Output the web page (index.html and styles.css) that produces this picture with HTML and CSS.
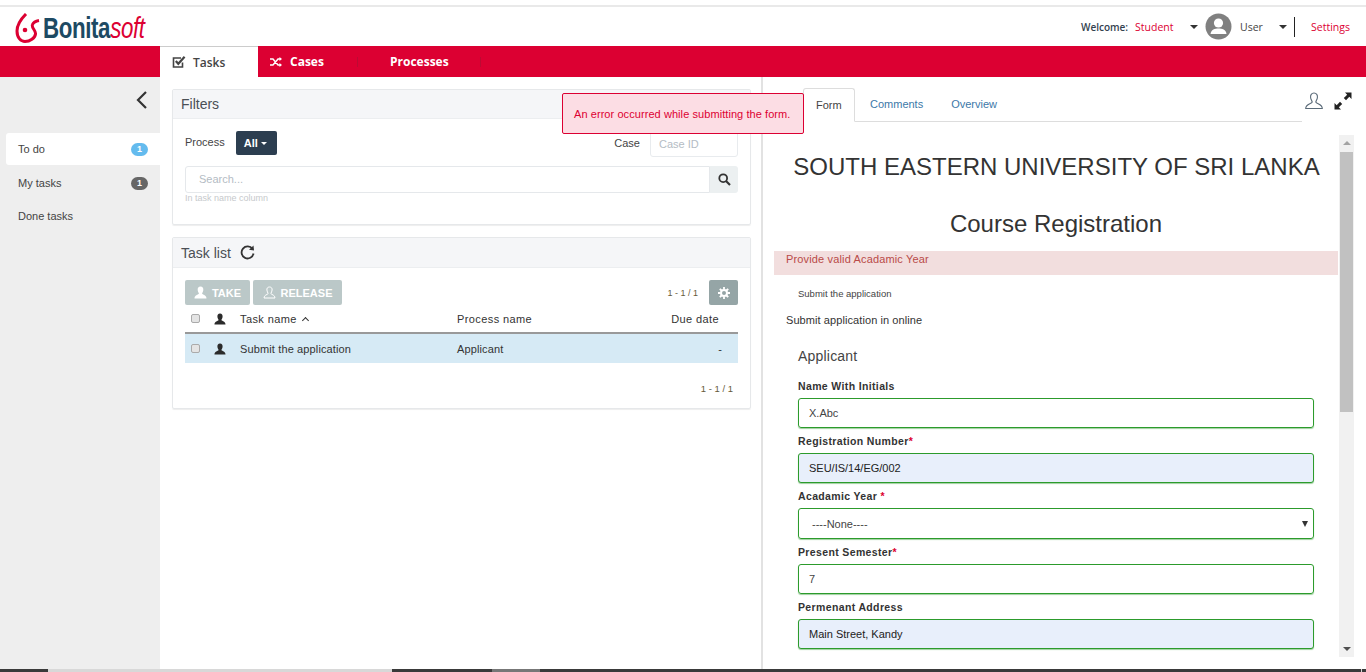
FILE: index.html
```html
<!DOCTYPE html>
<html lang="en">
<head>
    <meta charset="UTF-8">
    <title>Bonita Portal</title>
    <link rel="stylesheet" href="styles.css">
</head>
<body>
    <div class="app">
        <header class="header">
            <div class="logo">
                <svg class="logo-mark" width="26" height="30" viewBox="0 0 26 30">
                    <path d="M11 1 C5 7 2 13 2 18 C2 25 6 28.500 10 28.500 C15 28.500 20 25 20.500 21 C21 17 16 15 17.500 11.500 C18.500 9 21 8 24 7.500" fill="none" stroke="#dc0032" stroke-width="3"/>
                    <circle cx="10" cy="17" r="2.300" fill="#dc0032"/>
                </svg>
                <span class="logo-text"><span class="logo-dark">Bonita</span><span class="logo-red">soft</span></span>
            </div>
            <div class="user-area">
                <span class="welcome">Welcome:</span>
                <span class="student">Student</span>
                <span class="caret student-caret"></span>
                <svg class="avatar" width="27" height="27" viewBox="0 0 27 27">
                    <circle cx="13.5" cy="13.5" r="13" fill="#808080"/>
                    <circle cx="13.5" cy="10" r="4.6" fill="#fff"/>
                    <path d="M5.5 21 C6 16.5 10 15.5 13.5 15.5 C17 15.5 21 16.5 21.5 21 Z" fill="#fff"/>
                </svg>
                <span class="user-name">User</span>
                <span class="caret user-caret"></span>
                <span class="settings">Settings</span>
            </div>
        </header>

        <nav class="nav">
            <a class="nav-item active">
                <svg width="14" height="13" viewBox="0 0 14 13">
                    <path d="M10.5 6.5 V11 H1.5 V2 H9" fill="none" stroke="#444" stroke-width="1.6"/>
                    <path d="M3.8 5 L6.3 7.8 L12.6 0.8" fill="none" stroke="#444" stroke-width="2.2"/>
                </svg>
                Tasks
            </a>
            <a class="nav-item cases">
                <svg width="12" height="10" viewBox="0 0 12 10">
                    <path d="M0 2 H3 L8 8 H10 M0 8 H3 L8 2 H10" fill="none" stroke="#fff" stroke-width="1.4"/>
                    <path d="M9.500 0 L12 2 L9.500 4 Z M9.500 6 L12 8 L9.500 10 Z" fill="#fff"/>
                </svg>
                Cases
            </a>
            <a class="nav-item processes">Processes</a>
        </nav>

        <div class="content">
            <aside class="sidebar">
                <div class="collapse">
                    <svg width="13" height="18" viewBox="0 0 13 18"><path d="M11 1 L3 9 L11 17" fill="none" stroke="#333" stroke-width="2.200"/></svg>
                </div>
                <div class="side-item selected">To do <span class="badge blue">1</span></div>
                <div class="side-item">My tasks <span class="badge grey">1</span></div>
                <div class="side-item">Done tasks</div>
            </aside>

            <main class="tasks">
                <section class="panel filters">
                    <div class="panel-head">Filters</div>
                    <div class="filters-body">
                        <div class="filter-row">
                            <span class="filter-label">Process</span>
                            <span class="all-btn">All <i class="mini-caret"></i></span>
                            <span class="case-label">Case</span>
                            <span class="case-input">Case ID</span>
                        </div>
                        <div class="search">
                            <span class="search-input">Search...</span>
                            <span class="search-btn">
                                <svg width="13" height="13" viewBox="0 0 13 13">
                                    <circle cx="5.200" cy="5.200" r="3.900" fill="none" stroke="#333" stroke-width="1.800"/>
                                    <path d="M8 8 L12 12" stroke="#333" stroke-width="2.200"/>
                                </svg>
                            </span>
                        </div>
                        <div class="hint">In task name column</div>
                    </div>
                </section>

                <section class="panel list">
                    <div class="panel-head list-head">
                        Task list
                        <svg class="refresh" width="15" height="15" viewBox="0 0 15 15">
                            <path d="M12.500 4 A6 6 0 1 0 13.500 8.500" fill="none" stroke="#333" stroke-width="1.800"/>
                            <path d="M9 4.800 L14 5.500 L13.500 0.500 Z" fill="#333"/>
                        </svg>
                    </div>
                    <div class="list-body">
                        <div class="toolbar">
                            <span class="tool-btn take">
                                <svg width="13" height="13" viewBox="0 0 13 13"><path d="M6.500 0.500 C8.500 0.500 9.500 2 9.300 4 C9.200 5.500 8.500 6.500 8 7.500 C9 9 12.500 9 12.500 12.500 H0.500 C0.500 9 4 9 5 7.500 C4.500 6.500 3.800 5.500 3.700 4 C3.500 2 4.500 0.500 6.500 0.500 Z" fill="#fff"/></svg>
                                TAKE
                            </span>
                            <span class="tool-btn release">
                                <svg width="13" height="13" viewBox="0 0 13 13"><path d="M6.500 1 C8.500 1 9.300 2.400 9.100 4 C9 5.500 8.300 6.500 7.800 7.500 C9 9 12 9 12 12 H1 C1 9 4 9 5.200 7.500 C4.700 6.500 4 5.500 3.900 4 C3.700 2.400 4.500 1 6.500 1 Z" fill="none" stroke="#fff" stroke-width="1"/></svg>
                                RELEASE
                            </span>
                            <span class="pager top-pager">1 - 1 / 1</span>
                            <span class="gear-btn">
                                <svg width="12" height="12" viewBox="0 0 12 12">
                                    <circle cx="6" cy="6" r="3" fill="none" stroke="#fff" stroke-width="2"/>
                                    <path d="M6 0 V2.500 M6 9.500 V12 M0 6 H2.500 M9.500 6 H12 M1.800 1.800 L3.500 3.500 M8.500 8.500 L10.200 10.200 M1.800 10.200 L3.500 8.500 M8.500 3.500 L10.200 1.800" stroke="#fff" stroke-width="1.800"/>
                                </svg>
                            </span>
                        </div>
                        <div class="row head-row">
                            <span class="cell-check"><i class="checkbox"></i></span>
                            <span class="cell-user"><svg width="12" height="12" viewBox="0 0 13 13"><path d="M6.500 0.500 C8.500 0.500 9.500 2 9.300 4 C9.200 5.500 8.500 6.500 8 7.500 C9 9 12.500 9 12.500 12.500 H0.500 C0.500 9 4 9 5 7.500 C4.500 6.500 3.800 5.500 3.700 4 C3.500 2 4.500 0.500 6.500 0.500 Z" fill="#2b2b2b"/></svg></span>
                            <span class="cell-name">Task name <i class="sort-up"></i></span>
                            <span class="cell-process">Process name</span>
                            <span class="cell-due">Due date</span>
                        </div>
                        <div class="row task-row">
                            <span class="cell-check"><i class="checkbox"></i></span>
                            <span class="cell-user"><svg width="12" height="12" viewBox="0 0 13 13"><path d="M6.500 0.500 C8.500 0.500 9.500 2 9.300 4 C9.200 5.500 8.500 6.500 8 7.500 C9 9 12.500 9 12.500 12.500 H0.500 C0.500 9 4 9 5 7.500 C4.500 6.500 3.800 5.500 3.700 4 C3.500 2 4.500 0.500 6.500 0.500 Z" fill="#2b2b2b"/></svg></span>
                            <span class="cell-name">Submit the application</span>
                            <span class="cell-process">Applicant</span>
                            <span class="cell-due dash">-</span>
                        </div>
                        <div class="bottom-pager">1 - 1 / 1</div>
                    </div>
                </section>
            </main>

            <section class="detail">
                <div class="tabs">
                    <span class="tab current">Form</span>
                    <span class="tab">Comments</span>
                    <span class="tab">Overview</span>
                    <div class="tab-icons">
                        <svg width="18" height="18" viewBox="0 0 18 18"><path d="M9 1 C11.500 1 12.700 3 12.400 5.500 C12.200 7.500 11.200 8.500 10.800 10 C11.500 12 17.300 12 17.300 16.500 H0.700 C0.700 12 6.500 12 7.200 10 C6.800 8.500 5.800 7.500 5.600 5.500 C5.300 3 6.500 1 9 1 Z" fill="none" stroke="#5a6a78" stroke-width="1.100"/></svg>
                        <svg width="18" height="18" viewBox="0 0 18 18">
                            <path d="M17.500 0.500 H11 L13.200 2.700 L9.800 6 L12 8.200 L15.300 4.800 L17.500 7 Z" fill="#222"/>
                            <path d="M0.500 17.500 H7 L4.800 15.300 L8.200 12 L6 9.800 L2.700 13.200 L0.500 11 Z" fill="#222"/>
                        </svg>
                    </div>
                </div>
                <div class="form-wrap">
                    <div class="form-scroll">
                        <h1 class="uni">SOUTH EASTERN UNIVERSITY OF SRI LANKA</h1>
                        <h2 class="course">Course Registration</h2>
                        <div class="form-alert">Provide valid Acadamic Year</div>
                        <div class="small-title">Submit the application</div>
                        <div class="form-desc">Submit application in online</div>
                        <div class="fields">
                            <h3 class="fields-title">Applicant</h3>
                            <label class="field-label">Name With Initials</label>
                            <div class="field">X.Abc</div>
                            <label class="field-label">Registration Number<span class="req">*</span></label>
                            <div class="field filled">SEU/IS/14/EG/002</div>
                            <label class="field-label">Acadamic Year <span class="req">*</span></label>
                            <div class="field select"><span>----None----</span><i class="select-arrow"></i></div>
                            <label class="field-label">Present Semester<span class="req">*</span></label>
                            <div class="field">7</div>
                            <label class="field-label">Permenant Address</label>
                            <div class="field filled">Main Street, Kandy</div>
                        </div>
                    </div>
                    <div class="scrollbar">
                        <i class="arrow-up"></i>
                        <div class="thumb"></div>
                        <i class="arrow-down"></i>
                    </div>
                </div>
            </section>

            <div class="toast">An error occurred while submitting the form.</div>
        </div>

        <div class="taskbar">
            <i class="tb dark a"></i><i class="tb light b"></i><i class="tb dark c"></i><i class="tb mid d"></i><i class="tb dark e"></i><i class="tb light f"></i><i class="tb dark g"></i>
        </div>
    </div>
</body>
</html>
```

FILE: styles.css
```css
* {
    box-sizing: border-box;
}
html, body {
    margin: 0;
    height: 100%;
    overflow: hidden;
    background: #fff;
}
body {
    font-family: "Liberation Sans", Arial, sans-serif;
    font-size: 11px;
    color: #333;
}
i {
    display: block;
}
.app {
    width: 1366px;
    height: 672px;
    display: flex;
    flex-direction: column;
    padding-top: 5px;
}

/* top bar */
.header {
    height: 41px;
    border-top: 2px solid #e9e9e9;
    display: flex;
    align-items: center;
    justify-content: space-between;
    padding: 0 16px 0 15px;
}
.logo {
    display: flex;
    align-items: center;
    padding-top: 3px;
    font-size: 29px;
    font-weight: 700;
    letter-spacing: -0.5px;
}
.logo-mark {
    margin-right: 2px;
}
.logo-text {
    display: inline-block;
    transform: scaleX(0.77);
    transform-origin: left center;
}
.logo-dark {
    color: #1d4a63;
}
.logo-red {
    color: #dc0032;
    font-weight: 400;
    font-style: italic;
}
.user-area {
    display: flex;
    align-items: center;
    font-family: "Open Sans", sans-serif;
    font-size: 10.5px;
}
.welcome {
    font-size: 10px;
    font-weight: 600;
    color: #33424f;
}
.student {
    color: #dc0032;
    margin-left: 7px;
    width: 55px;
}
.caret {
    width: 0;
    height: 0;
    border-left: 4px solid transparent;
    border-right: 4px solid transparent;
    border-top: 4px solid #333;
}
.avatar {
    margin-left: 7px;
}
.user-name {
    margin-left: 8px;
    width: 39px;
    color: #444;
}
.settings {
    color: #dc0032;
    border-left: 1px solid #222;
    height: 20px;
    line-height: 20px;
    margin-left: 7px;
    padding-left: 16px;
}

/* red nav */
.nav {
    height: 31px;
    background: #dc0032;
    padding-left: 160px;
    display: flex;
    font-family: "Open Sans", sans-serif;
    font-weight: 700;
    font-size: 12px;
    color: #fff;
}
.nav-item {
    display: flex;
    align-items: center;
    gap: 7px;
}
.nav-item.active {
    width: 98px;
    padding-left: 12px;
    background: #fff;
    color: #444;
    font-weight: 600;
    gap: 7px;
    border-top: 1px solid #ccc;
}
.cases {
    width: 100px;
    padding-left: 12px;
    gap: 8px;
}
.processes {
    width: 123px;
    padding-left: 32px;
}
.cases, .processes {
    background: linear-gradient(#bd0a33, #bd0a33) right center / 1px 10px no-repeat;
}

/* main area */
.content {
    flex: 1;
    display: flex;
    position: relative;
    min-height: 0;
}
.sidebar {
    width: 160px;
    background: #eee;
    padding-left: 6px;
}
.collapse {
    height: 56px;
    padding: 14px 0 0 129px;
}
.side-item {
    height: 32px;
    line-height: 32px;
    margin-bottom: 1px;
    padding: 0 12px;
    display: flex;
    align-items: center;
    justify-content: space-between;
    font-size: 11px;
    color: #444;
}
.side-item.selected {
    background: #fff;
    border-radius: 3px 0 0 3px;
    margin-bottom: 2px;
}
.badge {
    width: 17px;
    height: 13px;
    border-radius: 7px;
    color: #fff;
    font-size: 9px;
    font-weight: 700;
    line-height: 13px;
    text-align: center;
}
.badge.blue {
    background: #64bbee;
}
.badge.grey {
    background: #666;
}

/* left column panels */
.tasks {
    width: 603px;
    padding: 12px 10px 0 12px;
    border-right: 2px solid #e2e2e2;
}
.panel {
    border: 1px solid #e6e8ea;
    border-radius: 2px;
    box-shadow: 0 1px 1px #eee;
}
.panel-head {
    height: 29px;
    background: #f5f6f8;
    border-bottom: 1px solid #eceef0;
    padding-left: 8px;
    font-size: 14px;
    line-height: 28px;
    color: #4a4f55;
    display: flex;
    align-items: center;
}
.list-head {
    height: 30px;
}
.filters {
    height: 136px;
    margin-bottom: 12px;
}
.filters-body {
    padding: 12px 12px 0;
}
.filter-row {
    display: flex;
    align-items: flex-start;
    height: 28px;
}
.filter-label {
    color: #444;
    margin-top: 5px;
}
.all-btn {
    margin-left: 11px;
    width: 41px;
    height: 24px;
    line-height: 24px;
    background: #2c3e50;
    color: #fff;
    font-weight: 700;
    border-radius: 2px;
    padding-left: 8px;
    display: flex;
    align-items: center;
    gap: 3px;
}
.mini-caret {
    border-left: 3px solid transparent;
    border-right: 3px solid transparent;
    border-top: 3px solid #fff;
}
.case-label {
    margin-left: auto;
    margin-top: 6px;
    color: #444;
}
.case-input {
    margin-left: 10px;
    width: 88px;
    height: 26px;
    line-height: 24px;
    border: 1px solid #e8ebee;
    border-radius: 3px;
    padding-left: 8px;
    color: #b4bcc4;
}
.search {
    display: flex;
    height: 27px;
    margin-top: 7px;
}
.search-input {
    flex: 1;
    border: 1px solid #e5e8eb;
    border-radius: 3px 0 0 3px;
    line-height: 25px;
    padding-left: 13px;
    color: #b4bcc4;
}
.search-btn {
    width: 28px;
    background: #ecf0f1;
    border-radius: 0 3px 3px 0;
    display: flex;
    align-items: center;
    justify-content: center;
}
.hint {
    font-size: 9px;
    color: #c6c9cc;
}
.list {
    height: 172px;
}
.refresh {
    margin-left: 9px;
}
.list-body {
    padding: 12px 12px 0;
}
.toolbar {
    display: flex;
    align-items: center;
    height: 25px;
    gap: 3px;
}
.tool-btn {
    height: 25px;
    background: #bbc8c8;
    color: #fff;
    font-weight: 700;
    font-size: 11px;
    border-radius: 2px;
    display: flex;
    align-items: center;
    justify-content: center;
    gap: 5px;
}
.take {
    width: 65px;
}
.release {
    width: 89px;
}
.top-pager {
    margin-left: auto;
    margin-right: 8px;
    font-size: 9px;
    color: #665a3a;
}
.gear-btn {
    width: 29px;
    height: 25px;
    background: #95a5a6;
    border-radius: 2px;
    display: flex;
    align-items: center;
    justify-content: center;
}
.row {
    display: flex;
    align-items: center;
    padding-left: 6px;
}
.head-row {
    height: 29px;
    border-bottom: 2px solid #999;
    color: #333;
    letter-spacing: 0.4px;
}
.task-row {
    height: 29px;
    background: #d6eaf5;
    letter-spacing: 0.13px;
}
.cell-check {
    width: 23px;
}
.checkbox {
    width: 9px;
    height: 9px;
    background: #e4e4e4;
    border: 1px solid #aaa;
    border-radius: 2px;
}
.cell-user {
    width: 26px;
    display: flex;
}
.cell-name {
    width: 217px;
    display: flex;
    align-items: center;
    gap: 6px;
}
.sort-up {
    width: 5px;
    height: 5px;
    margin-top: 3px;
    border-left: 1px solid #333;
    border-top: 1px solid #333;
    transform: rotate(45deg);
}
.cell-process {
    width: 174px;
}
.cell-due {
    width: 88px;
    text-align: right;
}
.cell-due.dash {
    width: 91px;
}
.bottom-pager {
    font-size: 9.500px;
    text-align: right;
    color: #665a3a;
    margin-top: 20px;
    padding-right: 5px;
}

/* right column */
.detail {
    flex: 1;
    min-width: 0;
    padding-top: 11px;
    display: flex;
    flex-direction: column;
}
.tabs {
    display: flex;
    position: relative;
    height: 34px;
    margin-left: 40px;
    width: 499px;
    border-bottom: 1px solid #ddd;
}
.tab {
    padding: 10px 13px 0 15px;
    color: #3c78a8;
    font-size: 11px;
}
.tab.current {
    height: 34px;
    width: 52px;
    padding-left: 12px;
    padding-right: 0;
    color: #444;
    background: #fff;
    border: 1px solid #ddd;
    border-bottom-color: #fff;
    border-radius: 3px 3px 0 0;
}
.tab-icons {
    position: absolute;
    left: 502px;
    top: 4px;
    display: flex;
    gap: 11px;
}
.form-wrap {
    display: flex;
    margin-top: 13px;
    height: 522px;
}
.form-scroll {
    width: 564px;
    margin-left: 11px;
    overflow: hidden;
}
.uni {
    margin: 0 0 0 1px;
    font-size: 24px;
    font-weight: 400;
    text-align: center;
    white-space: nowrap;
    line-height: 28px;
    padding-top: 18px;
    color: #333;
}
.course {
    margin: 29px 0 0;
    font-size: 24px;
    font-weight: 400;
    text-align: center;
    line-height: 28px;
    color: #333;
}
.form-alert {
    margin-top: 13px;
    height: 24px;
    background: #f2dede;
    color: #b94a48;
    padding: 2px 12px;
    font-size: 11px;
    letter-spacing: 0.15px;
    line-height: 12px;
}
.small-title {
    font-size: 9.500px;
    margin: 13px 0 0 24px;
    line-height: 12px;
    color: #444;
}
.form-desc {
    margin: 14px 0 0 12px;
    font-size: 11px;
    letter-spacing: 0.08px;
    line-height: 12px;
}
.fields {
    padding: 0 24px;
}
.fields-title {
    margin: 21px 0 0;
    font-size: 14px;
    font-weight: 400;
    letter-spacing: 0.2px;
    line-height: 18px;
    color: #444;
}
.field-label {
    display: block;
    height: 13px;
    margin-top: 7px;
    line-height: 13px;
    font-weight: 700;
    font-size: 10.500px;
    letter-spacing: 0.36px;
    color: #333;
}
.fields-title + .field-label {
    margin-top: 15px;
}
.field {
    height: 30px;
    line-height: 28px;
    margin-top: 5px;
    border: 1px solid #2c9b2c;
    border-radius: 3px;
    padding-left: 10px;
    box-shadow: 0 1px 1px #9fd09f;
    color: #444;
}
.field.filled {
    background: #e8effb;
    color: #222;
}
.field.select {
    height: 31px;
    display: flex;
    align-items: center;
    justify-content: space-between;
    padding: 0 5px 0 13px;
}
.select-arrow {
    border-left: 3px solid transparent;
    border-right: 3px solid transparent;
    border-top: 6px solid #333;
}
.req {
    color: #dc0032;
}
.scrollbar {
    width: 15px;
    margin-left: 1px;
    background: #f1f1f1;
    display: flex;
    flex-direction: column;
    align-items: center;
    padding: 6px 0;
}
.thumb {
    width: 13px;
    height: 260px;
    background: #c1c1c1;
    margin-top: 7px;
}
.arrow-up, .arrow-down {
    width: 0;
    border-left: 4px solid transparent;
    border-right: 4px solid transparent;
}
.arrow-up {
    border-bottom: 4px solid #a3a3a3;
}
.arrow-down {
    border-top: 4px solid #505050;
    margin-top: auto;
}

.toast {
    position: absolute;
    left: 562px;
    top: 16px;
    width: 242px;
    height: 41px;
    background: #fcdde4;
    border: 1px solid #dc0032;
    border-radius: 2px;
    color: #dc0032;
    font-size: 11px;
    letter-spacing: 0.07px;
    line-height: 40px;
    padding-left: 11px;
    white-space: nowrap;
}

.taskbar {
    height: 3px;
    display: flex;
}
.tb {
    height: 3px;
}
.dark {
    background: #3a3a3a;
}
.light {
    background: #d8d8d8;
}
.mid {
    background: #777;
}
.a { width: 48px; }
.b { width: 344px; }
.c { width: 100px; }
.d { width: 48px; }
.e { flex: 1; }
.f { width: 1px; }
.g { width: 4px; }
```
